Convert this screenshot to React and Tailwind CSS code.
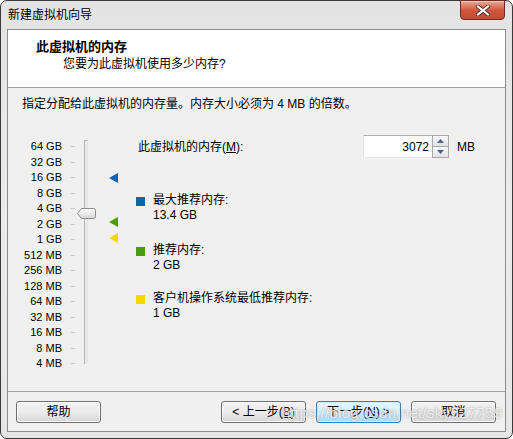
import React from "react";

const font = { fontFamily: '"Liberation Sans", "Noto Sans CJK SC", sans-serif' };

const sizes = ["64 GB", "32 GB", "16 GB", "8 GB", "4 GB", "2 GB", "1 GB", "512 MB", "256 MB", "128 MB", "64 MB", "32 MB", "16 MB", "8 MB", "4 MB"];

function Marker({ color, top }) {
    return (
        <svg className="absolute left-[13px]" style={{ top }} width="9" height="10" viewBox="0 0 9 10">
            <polygon points="0,5 9,0 9,10" fill={color} />
        </svg>
    );
}

function Legend({ color, label, value, className }) {
    return (
        <div className={`flex items-start ${className}`}>
            <div className={`w-[9px] h-[9px] mt-[4px] ${color}`} />
            <div className="ml-[8px] text-[12px] leading-[15px] text-black">
                <div>{label}</div>
                <div>{value}</div>
            </div>
        </div>
    );
}

function WinButton({ children, focused, className = "" }) {
    return (
        <button
            className={`w-[85px] h-[22px] rounded-[3px] border text-[12px] text-black flex items-center justify-center ${
                focused
                    ? "border-[#3c7fb1] bg-gradient-to-b from-[#eaf6fd] via-[#d9f0fc] to-[#a7d9f5] shadow-[inset_0_0_0_1px_#cdeeff]"
                    : "border-[#707070] bg-gradient-to-b from-[#f2f2f2] via-[#ebebeb] to-[#d6d6d6] shadow-[inset_0_0_0_1px_#fcfcfc]"
            } ${className}`}
        >
            {children}
        </button>
    );
}

export default function App() {
    return (
        <div style={font} className="w-[513px] h-[439px] overflow-hidden bg-white">
            <div className="relative w-[513px] h-[439px] rounded-[7px] border border-[#3a3a3a] bg-gradient-to-b from-[#e3e3e3] via-[#ececec] to-[#e6e6e6] px-[6px] flex flex-col">
                {/* title bar */}
                <div className="h-[28px] flex items-center pl-[1px] text-[12px] text-black">新建虚拟机向导</div>
                <div className="absolute right-[7px] top-[-1px] w-[45px] h-[20px] rounded-b-[4px] border border-[#6e2b22] bg-gradient-to-b from-[#e9a99a] via-[#d0583f] to-[#c44a2e] flex items-center justify-center shadow-[inset_0_1px_0_#f3c5b9]">
                    <svg width="14" height="11" viewBox="0 0 14 11">
                        <path d="M2 1.5 L12 9.5 M12 1.5 L2 9.5" stroke="#4a2a24" strokeWidth="4" strokeLinecap="square" />
                        <path d="M2 1.5 L12 9.5 M12 1.5 L2 9.5" stroke="#ffffff" strokeWidth="2.2" strokeLinecap="square" />
                    </svg>
                </div>

                {/* content */}
                <div className="h-[403px] border border-[#8c8c8c] bg-[#f0f0f0] flex flex-col">
                    <div className="h-[58px] bg-white border-b border-[#a0a0a0] pt-[8px]">
                        <div className="pl-[28px] text-[13px] leading-[17px] font-bold text-black">此虚拟机的内存</div>
                        <div className="pl-[55px] mt-[1px] text-[12px] leading-[17px] text-black">您要为此虚拟机使用多少内存?</div>
                    </div>

                    <div className="flex-1 pt-[8px]">
                        <div className="pl-[14px] text-[12px] leading-[16px] text-black">
                            指定分配给此虚拟机的内存量。内存大小必须为 4 MB 的倍数。
                        </div>

                        <div className="flex mt-[27px]">
                            <div className="ml-[6px] w-[48px] flex flex-col text-right text-[11px] text-black">
                                {sizes.map((s) => (
                                    <div key={s} className="h-[15.5px] leading-[15.5px] whitespace-nowrap">{s}</div>
                                ))}
                            </div>
                            <div className="ml-[9px] w-[4px] flex flex-col">
                                {sizes.map((s) => (
                                    <div key={s} className="h-[15.5px] flex items-center">
                                        <div className="w-[4px] h-[1px] bg-[#c8c8c8]" />
                                    </div>
                                ))}
                            </div>
                            <div className="relative ml-[1px] w-[20px]">
                                <div className="absolute left-[8px] top-[1px] w-[4px] h-[225px] border border-[#b5b5b5] border-r-[#e6e6e6] border-b-[#ffffff] bg-[#e7e7e7]" />
                                <svg className="absolute left-[1px] top-[69px]" width="19" height="11" viewBox="0 0 19 11">
                                    <defs>
                                        <linearGradient id="thumb" x1="0" y1="0" x2="0" y2="1">
                                            <stop offset="0" stopColor="#ffffff" />
                                            <stop offset="1" stopColor="#d4d4d4" />
                                        </linearGradient>
                                    </defs>
                                    <path d="M0.5 5.5 L4.5 0.5 H16.5 Q18.5 0.5 18.5 2.5 V8.5 Q18.5 10.5 16.5 10.5 H4.5 Z" fill="url(#thumb)" stroke="#8a8a8a" />
                                </svg>
                            </div>
                            <div className="relative w-[40px]">
                                <Marker color="#0f62ad" top={34} />
                                <Marker color="#4a9a14" top={78} />
                                <Marker color="#f5d500" top={94} />
                            </div>

                            <div className="flex flex-col -mt-[4px]">
                                <div className="h-[23px] flex items-center">
                                    <div className="ml-[2px] w-[225px] text-[12px] text-black">
                                        此虚拟机的内存(<span className="underline">M</span>):
                                    </div>
                                    <div className="w-[69px] h-[23px] border border-[#abadb3] border-l-[#e2e3ea] border-r-0 border-b-[#e3e9ef] bg-white flex items-center justify-end pr-[3px] text-[12px] text-black">
                                        3072
                                    </div>
                                    <div className="w-[17px] h-[23px] flex flex-col border border-[#a9a9a9] bg-[#f0f0f0]">
                                        <div className="flex-1 flex items-center justify-center border-b border-[#a9a9a9] bg-gradient-to-b from-[#f9f9f9] to-[#e2e2e2]">
                                            <svg width="7" height="4" viewBox="0 0 7 4"><polygon points="0,4 3.5,0 7,4" fill="#4d6185" /></svg>
                                        </div>
                                        <div className="flex-1 flex items-center justify-center bg-gradient-to-b from-[#f9f9f9] to-[#e2e2e2]">
                                            <svg width="7" height="4" viewBox="0 0 7 4"><polygon points="0,0 7,0 3.5,4" fill="#4d6185" /></svg>
                                        </div>
                                    </div>
                                    <div className="ml-[8px] text-[12px] text-black">MB</div>
                                </div>

                                <Legend color="bg-[#0f62ad]" label="最大推荐内存:" value="13.4 GB" className="mt-[35px]" />
                                <Legend color="bg-[#4a9a14]" label="推荐内存:" value="2 GB" className="mt-[20px]" />
                                <Legend color="bg-[#f5d800]" label="客户机操作系统最低推荐内存:" value="1 GB" className="mt-[18px]" />
                            </div>
                        </div>
                    </div>

                    <div className="relative h-[40px] border-t border-[#a0a0a0] flex items-start pt-[9px] pl-[8px]">
                        <WinButton>帮助</WinButton>
                        <WinButton className="ml-[120px]">&lt; 上一步(<span className="underline">B</span>)</WinButton>
                        <WinButton focused className="ml-[10px]">下一步(<span className="underline">N</span>) &gt;</WinButton>
                        <WinButton className="ml-[10px]">取消</WinButton>
                        <div className="absolute left-[274px] top-[10px] whitespace-nowrap text-[15px] leading-[22px] tracking-[0.3px] text-white/75 [text-shadow:0_0_2px_rgba(90,90,90,0.6)] pointer-events-none">
                            https://blog.csdn.net/sky527759
                        </div>
                    </div>
                </div>
            </div>
        </div>
    );
}
